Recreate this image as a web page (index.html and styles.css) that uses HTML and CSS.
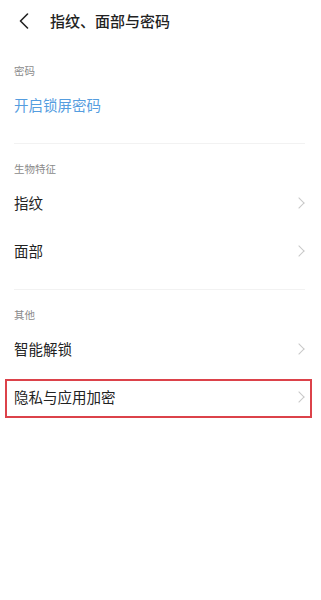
FILE: index.html
```html
<!DOCTYPE html>
<html>
<head lang="zh">
    <meta charset="UTF-8">
    <title>指纹、面部与密码</title>
    <link rel="stylesheet" href="styles.css">
</head>
<body>
<div class="page-header">
    <a class="back-btn" href="javascript:void(0);">
        <svg width="10" height="16" viewBox="0 0 10 16"><path d="M8.5 1 L1.5 8 L8.5 15" fill="none" stroke="#222" stroke-width="1.6" stroke-linecap="round" stroke-linejoin="round"/></svg>
    </a>
    <div class="page-title">指纹、面部与密码</div>
</div>

<div class="section section-first">
    <div class="section-label">密码</div>
    <div class="item item-link">开启锁屏密码</div>
</div>

<div class="section">
    <div class="section-label">生物特征</div>
    <div class="item">指纹<span class="chevron"></span></div>
    <div class="item">面部<span class="chevron"></span></div>
</div>

<div class="section section-last">
    <div class="section-label">其他</div>
    <div class="item">智能解锁<span class="chevron"></span></div>
    <div class="item item-marked">隐私与应用加密<span class="chevron"></span></div>
</div>
</body>
</html>
```

FILE: styles.css
```css
body {
    margin: 0;
    background: #ffffff;
    font-family: "Noto Sans CJK SC", "Noto Sans", sans-serif;
    color: #222222;
}
a {
    text-decoration: none;
    color: #222222;
}
.page-header {
    height: 42px;
    display: flex;
    align-items: center;
    padding-left: 19px;
}
.back-btn {
    display: flex;
    width: 31px;
}
.page-title {
    font-size: 15px;
    font-weight: 500;
    line-height: 42px;
}
.section {
    margin: 0 16px 0 14px;
    padding: 15px 0 14px 0;
    border-bottom: 1px solid #f2f2f2;
}
.section-first {
    padding-top: 19px;
}
.section-last {
    border-bottom: none;
}
.section-label {
    height: 20px;
    line-height: 20px;
    font-size: 10.5px;
    color: #8a8a8a;
}
.item {
    position: relative;
    height: 48px;
    line-height: 20px;
    display: flex;
    align-items: center;
    justify-content: space-between;
    font-size: 14.5px;
}
.item-link {
    color: #559ddf;
}
.chevron {
    width: 7px;
    height: 7px;
    border-top: 1px solid #c8c8c8;
    border-right: 1px solid #c8c8c8;
    transform: rotate(45deg);
    margin-right: 2px;
}
.item-marked::after {
    content: "";
    position: absolute;
    top: 6px;
    bottom: 3px;
    left: -9px;
    right: -7px;
    border: 2px solid #dc424a;
}
```
